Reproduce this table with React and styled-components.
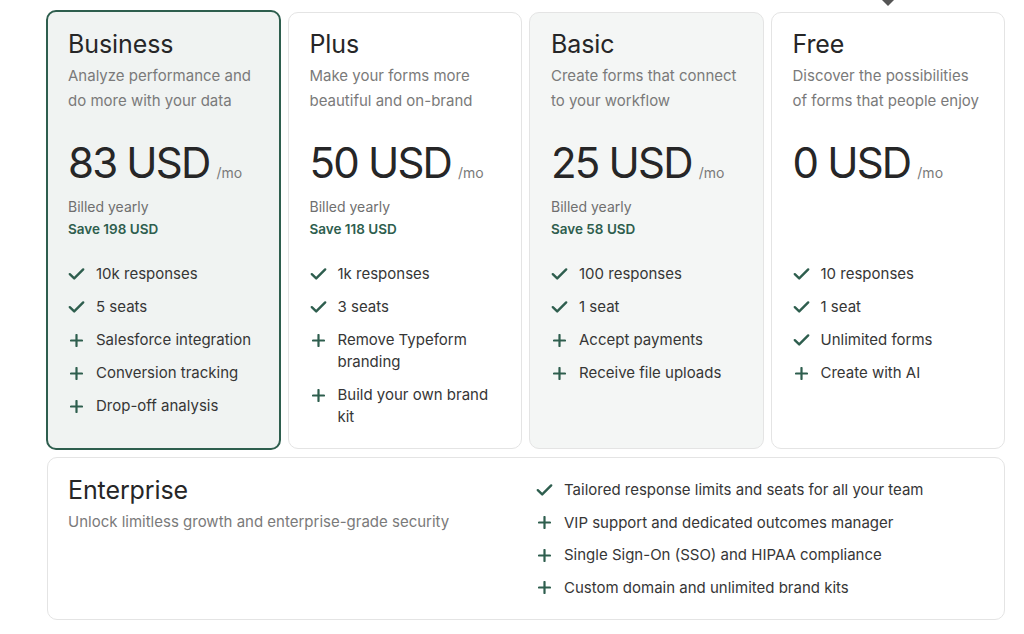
import React from 'react';
import styled, { createGlobalStyle } from 'styled-components';

const GlobalStyle = createGlobalStyle`
  body {
    margin: 0;
    background: #ffffff;
    font-family: Inter, "Noto Sans", sans-serif;
    color: #262627;
  }
`;

const Page = styled.div`
  position: relative;
  width: 1024px;
  height: 634px;
  padding: 10px 19px 0 46px;
  box-sizing: border-box;
  display: flex;
  flex-direction: column;
  gap: 7px;
`;

const Pointer = styled.div`
  position: absolute;
  top: 0;
  left: 882px;
  width: 0;
  height: 0;
  border-left: 6px solid transparent;
  border-right: 6px solid transparent;
  border-top: 6px solid #555555;
`;

const PlanGrid = styled.div`
  display: grid;
  grid-template-columns: repeat(4, 1fr);
  gap: 7px;
`;

const Card = styled.div`
  box-sizing: border-box;
  border-radius: 10px;
  border: ${p => (p.$selected ? '2px solid #2e5e4e' : '1px solid #e4e4e4')};
  background: ${p => p.$bg || '#ffffff'};
  padding: ${p => (p.$selected ? '15px 20px 20px 20px' : '14px 21px 20px 21px')};
  margin-top: ${p => (p.$selected ? '0' : '2px')};
  margin-bottom: ${p => (p.$selected ? '0' : '1px')};
`;

const Title = styled.h2`
  margin: 0;
  font-size: 25px;
  line-height: 34px;
  font-weight: 400;
  color: #262627;
  letter-spacing: -0.1px;
`;

const Description = styled.p`
  margin: 2px 0 0 0;
  font-size: 15px;
  line-height: 25px;
  color: #7a7a7a;
`;

const PriceRow = styled.div`
  margin-top: 22px;
  display: flex;
  align-items: baseline;
  gap: 7px;
`;

const Amount = styled.span`
  font-size: 42px;
  line-height: 56px;
  color: #262627;
  letter-spacing: -1.8px;
`;

const Period = styled.span`
  font-size: 14px;
  color: #7a7a7a;
`;

const Billing = styled.div`
  margin-top: 5px;
  height: 44px;
  font-size: 14px;
  line-height: 22px;
`;

const Billed = styled.div`
  color: #6f6f6f;
`;

const Save = styled.div`
  color: #2e5e4e;
  font-weight: 600;
  font-size: 13.5px;
`;

const FeatureList = styled.ul`
  list-style: none;
  margin: ${p => (p.$top ? p.$top : '23px')} 0 0 0;
  padding: 0;
  display: flex;
  flex-direction: column;
  gap: ${p => p.$gap || '11px'};
`;

const Feature = styled.li`
  display: flex;
  align-items: flex-start;
  gap: 11px;
  font-size: 15px;
  line-height: 22px;
  color: #363636;
`;

const IconBox = styled.span`
  flex: 0 0 17px;
  height: 22px;
  display: flex;
  align-items: center;
  justify-content: center;
`;

const Enterprise = styled.div`
  box-sizing: border-box;
  border-radius: 10px;
  border: 1px solid #e4e4e4;
  margin-left: 1px;
  padding: 15px 21px 20px 20px;
  display: grid;
  grid-template-columns: 1fr 1fr;
  gap: 21px;
`;

const Check = () => (
  <svg width="17" height="14" viewBox="0 0 17 14" fill="none">
    <path d="M1.8 7.2 L6.2 11.4 L15.2 2.4" stroke="#2e5e4e" strokeWidth="2.4" strokeLinecap="round" strokeLinejoin="round" />
  </svg>
);

const Plus = () => (
  <svg width="13" height="13" viewBox="0 0 13 13" fill="none">
    <path d="M6.5 1 V12 M1 6.5 H12" stroke="#2e5e4e" strokeWidth="2.2" strokeLinecap="round" />
  </svg>
);

const FeatureItem = ({ kind, children }) => (
  <Feature>
    <IconBox>{kind === 'check' ? <Check /> : <Plus />}</IconBox>
    <span>{children}</span>
  </Feature>
);

const plans = [
  {
    name: 'Business',
    desc: ['Analyze performance and', 'do more with your data'],
    price: '83 USD',
    save: 'Save 198 USD',
    selected: true,
    bg: '#f0f3f2',
    features: [
      ['check', '10k responses'],
      ['check', '5 seats'],
      ['plus', 'Salesforce integration'],
      ['plus', 'Conversion tracking'],
      ['plus', 'Drop-off analysis'],
    ],
  },
  {
    name: 'Plus',
    desc: ['Make your forms more', 'beautiful and on-brand'],
    price: '50 USD',
    save: 'Save 118 USD',
    features: [
      ['check', '1k responses'],
      ['check', '3 seats'],
      ['plus', 'Remove Typeform branding'],
      ['plus', 'Build your own brand kit'],
    ],
  },
  {
    name: 'Basic',
    desc: ['Create forms that connect', 'to your workflow'],
    price: '25 USD',
    save: 'Save 58 USD',
    bg: '#f4f6f5',
    features: [
      ['check', '100 responses'],
      ['check', '1 seat'],
      ['plus', 'Accept payments'],
      ['plus', 'Receive file uploads'],
    ],
  },
  {
    name: 'Free',
    desc: ['Discover the possibilities', 'of forms that people enjoy'],
    price: '0 USD',
    features: [
      ['check', '10 responses'],
      ['check', '1 seat'],
      ['check', 'Unlimited forms'],
      ['plus', 'Create with AI'],
    ],
  },
];

const enterpriseFeatures = [
  ['check', 'Tailored response limits and seats for all your team'],
  ['plus', 'VIP support and dedicated outcomes manager'],
  ['plus', 'Single Sign-On (SSO) and HIPAA compliance'],
  ['plus', 'Custom domain and unlimited brand kits'],
];

const PlanCard = ({ plan }) => (
  <Card $selected={plan.selected} $bg={plan.bg}>
    <Title>{plan.name}</Title>
    <Description>
      {plan.desc[0]}
      <br />
      {plan.desc[1]}
    </Description>
    <PriceRow>
      <Amount>{plan.price}</Amount>
      <Period>/mo</Period>
    </PriceRow>
    <Billing>
      {plan.save && (
        <>
          <Billed>Billed yearly</Billed>
          <Save>{plan.save}</Save>
        </>
      )}
    </Billing>
    <FeatureList>
      {plan.features.map(([kind, text]) => (
        <FeatureItem key={text} kind={kind}>{text}</FeatureItem>
      ))}
    </FeatureList>
  </Card>
);

export default function App() {
  return (
    <>
      <GlobalStyle />
      <Page>
        <Pointer />
        <PlanGrid>
          {plans.map(plan => (
            <PlanCard key={plan.name} plan={plan} />
          ))}
        </PlanGrid>
        <Enterprise>
          <div>
            <Title>Enterprise</Title>
            <Description>Unlock limitless growth and enterprise-grade security</Description>
          </div>
          <FeatureList $top="6px" $gap="10.5px">
            {enterpriseFeatures.map(([kind, text]) => (
              <FeatureItem key={text} kind={kind}>{text}</FeatureItem>
            ))}
          </FeatureList>
        </Enterprise>
      </Page>
    </>
  );
}
